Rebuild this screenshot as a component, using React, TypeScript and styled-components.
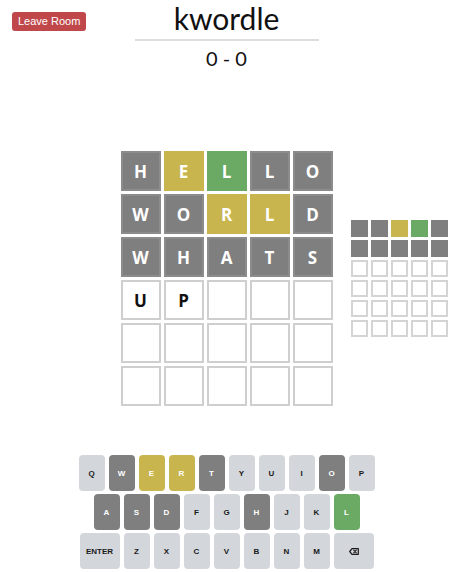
import styled, { createGlobalStyle } from "styled-components";

const GlobalStyle = createGlobalStyle`
  html, body {
    margin: 0;
    padding: 0;
    background: #ffffff;
  }
`;

type TileState = "absent" | "present" | "correct" | "typed" | "empty";

const colors: Record<TileState, string> = {
  absent: "#7f7f7f",
  present: "#c9b54e",
  correct: "#6aaa64",
  typed: "#ffffff",
  empty: "#ffffff",
};

const Page = styled.div`
  width: 453px;
  display: flex;
  flex-direction: column;
  font-family: "Lato", "Open Sans", sans-serif;
  color: #111;
`;

const Header = styled.header`
  display: grid;
  grid-template-columns: 1fr 184px 1fr;
`;

const LeaveButton = styled.button`
  justify-self: start;
  align-self: start;
  margin: 12px 0 0 12px;
  height: 19px;
  padding: 0 6px;
  border: none;
  border-radius: 3px;
  background: #c0484b;
  color: #fff;
  font-family: "Liberation Sans", Arial, sans-serif;
  font-size: 11px;
  line-height: 19px;
  cursor: pointer;
`;

const TitleBlock = styled.div`
  display: flex;
  flex-direction: column;
  align-items: center;
`;

const Title = styled.h1`
  width: 100%;
  margin: 0;
  padding-bottom: 3px;
  border-bottom: 2px solid #dddddd;
  text-align: center;
  font-size: 30px;
  font-weight: 400;
  line-height: 36px;
`;

const Score = styled.div`
  margin-top: 5px;
  font-size: 20px;
  line-height: 24px;
`;

const BoardArea = styled.main`
  margin-top: 81px;
  display: grid;
  grid-template-columns: 1fr auto 1fr;
  align-items: center;
`;

const Board = styled.div<{ $tile: number; $gap: number }>`
  display: grid;
  grid-template-columns: repeat(5, ${(p) => p.$tile}px);
  grid-auto-rows: ${(p) => p.$tile}px;
  gap: ${(p) => p.$gap}px;
`;

const MiniBoard = styled(Board)`
  justify-self: start;
  margin-left: 18px;
`;

const Tile = styled.div<{ $state: TileState }>`
  box-sizing: border-box;
  display: flex;
  align-items: center;
  justify-content: center;
  background: ${(p) => colors[p.$state]};
  border: 2px solid
    ${(p) =>
      p.$state === "empty" || p.$state === "typed"
        ? "#cfcfcf"
        : p.$state === "absent"
        ? "#8c8c8c"
        : colors[p.$state]};
  color: ${(p) => (p.$state === "typed" ? "#111" : "#fff")};
  font-family: "Open Sans", "Noto Sans", sans-serif;
  font-size: 17px;
  font-weight: 700;
`;

const MiniTile = styled.div<{ $state: TileState }>`
  box-sizing: border-box;
  background: ${(p) => colors[p.$state]};
  border: 2px solid
    ${(p) => (p.$state === "empty" ? "#d4d4d4" : colors[p.$state])};
`;

const Keyboard = styled.section`
  margin-top: 49px;
  display: flex;
  flex-direction: column;
  align-items: center;
  gap: 3px;
`;

const KeyRow = styled.div`
  display: flex;
  gap: 4px;
`;

const Key = styled.button<{ $state?: TileState; $wide?: boolean }>`
  width: ${(p) => (p.$wide ? 40 : 26)}px;
  height: 36px;
  padding: 0;
  border: none;
  border-radius: 4px;
  display: flex;
  align-items: center;
  justify-content: center;
  background: ${(p) =>
    p.$state && p.$state !== "empty" ? colors[p.$state] : "#d3d6da"};
  color: ${(p) => (p.$state && p.$state !== "empty" ? "#fff" : "#1a1a1a")};
  font-family: "Liberation Sans", Arial, sans-serif;
  font-size: 8px;
  font-weight: 700;
  cursor: pointer;
`;

const guesses: { word: string; states: TileState[] }[] = [
  { word: "HELLO", states: ["absent", "present", "correct", "absent", "absent"] },
  { word: "WORLD", states: ["absent", "absent", "present", "present", "absent"] },
  { word: "WHATS", states: ["absent", "absent", "absent", "absent", "absent"] },
  { word: "UP", states: ["typed", "typed", "empty", "empty", "empty"] },
];

const opponent: TileState[][] = [
  ["absent", "absent", "present", "correct", "absent"],
  ["absent", "absent", "absent", "absent", "absent"],
];

const keyStates: Record<string, TileState> = {
  W: "absent",
  E: "present",
  R: "present",
  T: "absent",
  O: "absent",
  A: "absent",
  S: "absent",
  D: "absent",
  H: "absent",
  L: "correct",
};

const rows = ["QWERTYUIOP", "ASDFGHJKL", "ZXCVBNM"];

function BackspaceIcon() {
  return (
    <svg width="10" height="7" viewBox="0 0 10 7">
      <path
        d="M3 0.7 H9.3 V6.3 H3 L0.7 3.5 Z"
        fill="none"
        stroke="#1a1a1a"
        strokeWidth="1.2"
        strokeLinejoin="round"
      />
      <path
        d="M4.7 2.2 L7.3 4.8 M7.3 2.2 L4.7 4.8"
        stroke="#1a1a1a"
        strokeWidth="1.1"
        strokeLinecap="round"
      />
    </svg>
  );
}

export default function App() {
  const mainRows = Array.from({ length: 6 }, (_, r) => guesses[r]);

  return (
    <Page>
      <GlobalStyle />
      <Header>
        <LeaveButton>Leave Room</LeaveButton>
        <TitleBlock>
          <Title>kwordle</Title>
          <Score>0 - 0</Score>
        </TitleBlock>
      </Header>

      <BoardArea>
        <div />
        <Board $tile={40} $gap={3}>
          {mainRows.map((row, r) =>
            Array.from({ length: 5 }, (_, c) => (
              <Tile key={`${r}-${c}`} $state={row ? row.states[c] : "empty"}>
                {row?.word[c] ?? ""}
              </Tile>
            ))
          )}
        </Board>
        <MiniBoard $tile={17} $gap={3}>
          {Array.from({ length: 6 }, (_, r) =>
            Array.from({ length: 5 }, (_, c) => (
              <MiniTile
                key={`${r}-${c}`}
                $state={opponent[r] ? opponent[r][c] : "empty"}
              />
            ))
          )}
        </MiniBoard>
      </BoardArea>

      <Keyboard>
        {rows.map((row, i) => (
          <KeyRow key={row}>
            {i === 2 && <Key $wide>ENTER</Key>}
            {row.split("").map((k) => (
              <Key key={k} $state={keyStates[k]}>
                {k}
              </Key>
            ))}
            {i === 2 && (
              <Key $wide aria-label="backspace">
                <BackspaceIcon />
              </Key>
            )}
          </KeyRow>
        ))}
      </Keyboard>
    </Page>
  );
}
